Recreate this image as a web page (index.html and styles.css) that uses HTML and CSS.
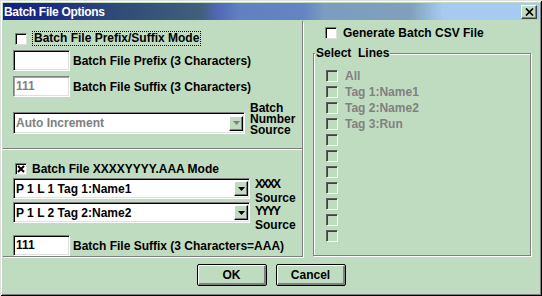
FILE: index.html
```html
<!DOCTYPE html>
<html lang="en">
  <head>
    <meta charset="UTF-8" />
    <meta name="viewport" content="width=device-width, initial-scale=1.0" />
    <title>Batch File Options</title>
    <link rel="stylesheet" href="styles.css">
  </head>
  <body>
    <div class="window">
      <div class="titlebar">
        <span class="title">Batch File Options</span>
        <span class="close">
          <svg width="9" height="8" viewBox="0 0 9 8"><path d="M1 0.5L8 7.5M8 0.5L1 7.5" stroke="#000" stroke-width="1.7" /></svg>
        </span>
      </div>

      <div class="content">
        <div class="left">
          <div class="sect sect-top">
            <div class="check-row">
              <span class="check"></span>
              <span class="focus">Batch File Prefix/Suffix Mode</span>
            </div>
            <div class="field-row">
              <span class="field"></span>
              <span class="field-label">Batch File Prefix (3 Characters)</span>
            </div>
            <div class="field-row gap5">
              <span class="field disabled">111</span>
              <span class="field-label">Batch File Suffix (3 Characters)</span>
            </div>
            <div class="source-row">
              <div class="combo disabled wide">
                <span class="combo-text">Auto Increment</span>
                <span class="drop">
                  <svg width="7" height="4" viewBox="0 0 7 4"><path d="M0 0H7L3.5 4Z" fill="#808080" /></svg>
                </span>
              </div>
              <div class="source-label">Batch<br>Number<br>Source</div>
            </div>
          </div>

          <div class="sect sect-bottom">
            <div class="check-row">
              <span class="check checked">
                <svg width="10" height="10" viewBox="0 0 10 10"><path d="M2 2L8 8M8 2L2 8" stroke="#000" stroke-width="2" /></svg>
              </span>
              <span class="check-label">Batch File XXXXYYYY.AAA Mode</span>
            </div>
            <div class="combo-group">
              <div class="combos">
                <div class="combo">
                  <span class="combo-text">P 1 L 1 Tag 1:Name1</span>
                  <span class="drop">
                    <svg width="7" height="4" viewBox="0 0 7 4"><path d="M0 0H7L3.5 4Z" fill="#000" /></svg>
                  </span>
                </div>
                <div class="combo">
                  <span class="combo-text">P 1 L 2 Tag 2:Name2</span>
                  <span class="drop">
                    <svg width="7" height="4" viewBox="0 0 7 4"><path d="M0 0H7L3.5 4Z" fill="#000" /></svg>
                  </span>
                </div>
              </div>
              <div class="xy-label">
                <span class="tight">XXXX</span><br>Source<br><span class="tight">YYYY</span><br>Source
              </div>
            </div>
            <div class="field-row gap3">
              <span class="field">111</span>
              <span class="field-label">Batch File Suffix (3 Characters=AAA)</span>
            </div>
          </div>
        </div>

        <div class="right">
          <div class="check-row csv">
            <span class="check"></span>
            <span class="check-label">Generate Batch CSV File</span>
          </div>
          <fieldset class="group">
            <legend>Select&nbsp;&nbsp;Lines</legend>
            <div class="lines">
              <div class="line"><span class="check off"></span><span>All</span></div>
              <div class="line"><span class="check off"></span><span>Tag 1:Name1</span></div>
              <div class="line"><span class="check off"></span><span>Tag 2:Name2</span></div>
              <div class="line"><span class="check off"></span><span>Tag 3:Run</span></div>
              <div class="line"><span class="check off"></span></div>
              <div class="line"><span class="check off"></span></div>
              <div class="line"><span class="check off"></span></div>
              <div class="line"><span class="check off"></span></div>
              <div class="line"><span class="check off"></span></div>
              <div class="line"><span class="check off"></span></div>
              <div class="line"><span class="check off"></span></div>
            </div>
          </fieldset>
        </div>
      </div>

      <div class="buttons">
        <button>OK</button>
        <button>Cancel</button>
      </div>
    </div>
  </body>
</html>
```

FILE: styles.css
```css
body {
  margin: 0;
  font-family: "Liberation Sans", Arial, sans-serif;
  font-size: 12px;
  font-weight: bold;
  color: #000;
}
.window {
  width: 542px;
  height: 296px;
  box-sizing: border-box;
  padding: 3px;
  background: #c0dcc0;
  display: flex;
  flex-direction: column;
  box-shadow: inset 1px 1px #dfdfdf, inset -1px -1px #000,
    inset 2px 2px #fff, inset -2px -2px #808080;
}
.titlebar {
  height: 17px;
  display: flex;
  align-items: center;
  justify-content: space-between;
  padding: 0 2px 0 1px;
  background: linear-gradient(
    90deg,
    #142080 0%,
    #1c2c80 8%,
    #304c78 22%,
    #40607c 37%,
    #5068b8 40%,
    #6080c0 44%,
    #6484c4 56%,
    #7c9cc0 60%,
    #80a0bc 76%,
    #a6caf0 82%,
    #a6caf0 100%
  );
}
.title {
  color: #fff;
  letter-spacing: -0.3px;
}
.close {
  width: 14px;
  height: 12px;
  display: flex;
  align-items: center;
  justify-content: center;
  background: #c0dcc0;
  border: 1px solid;
  border-color: #fff #404040 #404040 #fff;
  box-shadow: inset -1px -1px #808080;
}
.content {
  display: flex;
  height: 236px;
  margin-top: 1px;
}
.left {
  width: 300px;
  box-sizing: border-box;
  display: flex;
  flex-direction: column;
  border-right: 1px solid #808080;
  border-bottom: 1px solid #808080;
  box-shadow: 1px 1px #fff;
}
.sect {
  padding-left: 10px;
}
.sect-top {
  height: 121px;
  padding-top: 10px;
  border-bottom: 1px solid #808080;
}
.sect-bottom {
  flex: 1;
  padding-top: 11px;
  border-top: 1px solid #fff;
}
.check-row {
  height: 15px;
  display: flex;
  align-items: center;
}
.check {
  width: 12px;
  height: 12px;
  box-sizing: border-box;
  margin-left: 2px;
  margin-right: 5px;
  display: flex;
  align-items: center;
  justify-content: center;
  background: #fff;
  border: 1px solid;
  border-color: #808080 #dfdfdf #dfdfdf #808080;
  box-shadow: inset 1px 1px #000;
}
.check.off {
  background: transparent;
  border-color: #606060 #fff #fff #606060;
  box-shadow: inset 1px 1px #404040;
}
.focus {
  height: 15px;
  box-sizing: border-box;
  line-height: 13px;
  padding: 0 1px;
  border: 1px dotted #000;
}
.field-row {
  display: flex;
  align-items: center;
  margin-top: 4px;
}
.field-row.gap5 {
  margin-top: 5px;
}
.field-row.gap3 {
  margin-top: 3px;
}
.field {
  width: 57px;
  height: 21px;
  box-sizing: border-box;
  padding-left: 2px;
  line-height: 19px;
  background: #fff;
  border: 1px solid;
  border-color: #808080 #fff #fff #808080;
  box-shadow: inset 1px 1px #000, inset -1px -1px #dfdfdf;
}
.field.disabled {
  color: #808080;
  box-shadow: inset 1px 1px #a0a0a0, inset -1px -1px #dfdfdf;
}
.field-label {
  margin-left: 3px;
}
.source-row {
  display: flex;
  align-items: flex-start;
  margin-top: 6px;
}
.combo {
  width: 237px;
  height: 21px;
  box-sizing: border-box;
  display: flex;
  align-items: center;
  justify-content: space-between;
  padding: 0 1px 0 2px;
  background: #fff;
  border: 1px solid;
  border-color: #808080 #fff #fff #808080;
  box-shadow: inset 1px 1px #000, inset -1px -1px #dfdfdf;
}
.combo.wide {
  width: 232px;
  height: 22px;
  margin-top: 9px;
}
.combo.disabled {
  color: #808080;
}
.drop {
  width: 14px;
  height: 15px;
  box-sizing: border-box;
  display: flex;
  align-items: center;
  justify-content: center;
  background: #c0dcc0;
  border: 1px solid;
  border-color: #fff #000 #000 #fff;
  box-shadow: inset -1px -1px #808080;
}
.source-label {
  margin-left: 5px;
  line-height: 11px;
}
.combo-group {
  display: flex;
  margin-top: 2px;
}
.combos {
  display: flex;
  flex-direction: column;
  gap: 3px;
}
.xy-label {
  margin-left: 5px;
  line-height: 13.4px;
}
.tight {
  letter-spacing: -2px;
}
.right {
  flex: 1;
  display: flex;
  flex-direction: column;
  padding-top: 4px;
}
.csv {
  margin-left: 20px;
}
.csv .check {
  margin-right: 6px;
}
.group {
  flex: 1;
  margin: 6px 8px 1px 10px;
  padding: 0;
  min-width: 0;
  border: 1px solid #808080;
  box-shadow: inset 1px 1px #fff, 1px 1px #fff;
}
.group legend {
  margin-left: 1px;
  padding: 0 1px;
  line-height: 14px;
  background: #c0dcc0;
}
.lines {
  padding: 8px 0 0 10px;
}
.line {
  height: 16px;
  display: flex;
  align-items: center;
  color: #808080;
}
.line .check {
  margin-right: 7px;
}
.buttons {
  display: flex;
  justify-content: center;
  gap: 9px;
  margin-top: 7px;
}
button {
  width: 70px;
  height: 22px;
  padding: 0;
  font-family: inherit;
  font-size: 12px;
  font-weight: bold;
  color: #000;
  background: #c0dcc0;
  border: 1px solid #000;
  border-radius: 2px;
  box-shadow: inset 1px 1px #fff, inset -2px -2px #808080;
}
```
